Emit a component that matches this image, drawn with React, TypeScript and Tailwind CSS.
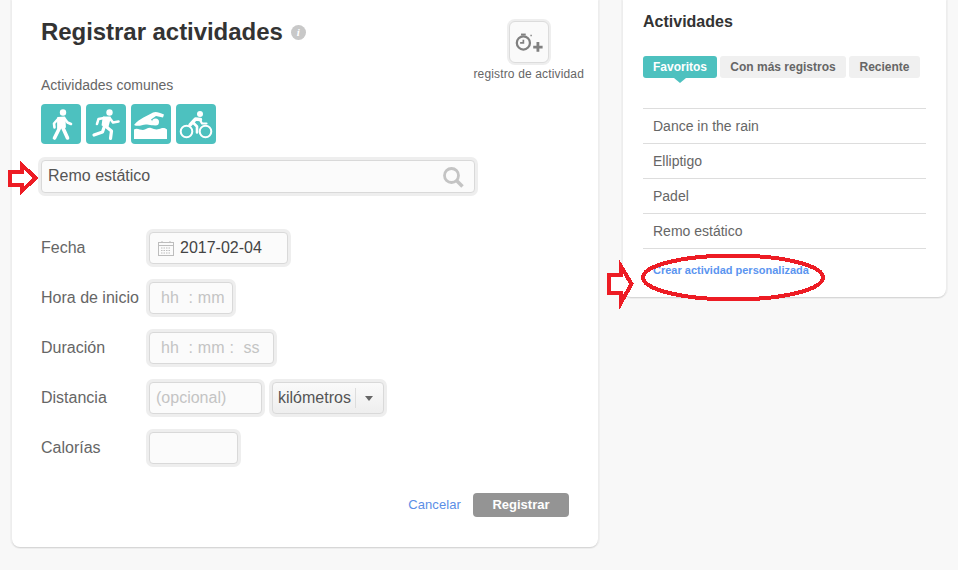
const font = "font-['Liberation_Sans',Arial,sans-serif]";
const field =
  "h-8 rounded border border-[#d9d9d9] bg-[#fbfbfb] shadow-[0_0_0_3px_#eeeeee] flex items-center";

function Walk() {
  return (
    <svg viewBox="0 0 40 40" className="w-10 h-10" fill="white" stroke="white" strokeLinecap="round" strokeLinejoin="round">
      <circle cx="22" cy="8.5" r="3.2" stroke="none" />
      <path d="M17 14 L23.5 13.5 L24 23 L17 24 Z" strokeWidth="1.8" />
      <path d="M17 15 L13 19.5 L13.5 23.5" fill="none" strokeWidth="2.6" />
      <path d="M23.5 14.5 L26.5 18.5 L30 20" fill="none" strokeWidth="2.6" />
      <path d="M18.5 24 L13.5 34" fill="none" strokeWidth="3.6" />
      <path d="M22 24 L26.5 34" fill="none" strokeWidth="3.6" />
    </svg>
  );
}

function Run() {
  return (
    <svg viewBox="0 0 40 40" className="w-10 h-10" fill="white" stroke="white" strokeLinecap="round" strokeLinejoin="round">
      <circle cx="23.5" cy="8.5" r="3.2" stroke="none" />
      <path d="M17.5 13.5 L24 13.5 L21.5 23 L16.5 21 Z" strokeWidth="1.8" />
      <path d="M18 14 L12.5 15 L11 20" fill="none" strokeWidth="2.6" />
      <path d="M24 14.5 L27 18.5 L32.5 17.5" fill="none" strokeWidth="2.6" />
      <path d="M18.5 22 L16.5 28 L8 31" fill="none" strokeWidth="3.2" />
      <path d="M20.5 23 L25.5 27 L24.5 34.5" fill="none" strokeWidth="3.2" />
    </svg>
  );
}

function Swim() {
  return (
    <svg viewBox="0 0 40 40" className="w-10 h-10" fill="white">
      <path d="M3 21 C9 14 16 12 22 8.5 C25 7 28 8.5 33 10.5 L32 13.5 L25 12 L20 15.5 L24 21 C21 22 18 20 15 20.5 C11 21 7 23 3 21 Z" />
      <circle cx="24.5" cy="18" r="3.5" />
      <path d="M3 25.5 C6 23.5 9 26 12 26 C15 26 17 23 20 24 C23 25 25 26 28 25 C31 24 33 23 36 25.5 V35 H3 Z" />
    </svg>
  );
}

function Bike() {
  return (
    <svg viewBox="0 0 40 40" className="w-10 h-10" fill="none" stroke="white" strokeLinecap="round" strokeLinejoin="round">
      <circle cx="24" cy="10" r="3" fill="white" stroke="none" />
      <circle cx="10.5" cy="27.5" r="5.8" strokeWidth="2" />
      <circle cx="29.5" cy="27.5" r="5.8" strokeWidth="2" />
      <path d="M14 21 L19.5 15 L24.5 15.5" strokeWidth="3.4" />
      <path d="M17 18.5 L21 22.5 V28.5" strokeWidth="2.6" />
      <path d="M24 16 L26 19.5 L30.5 19.5" strokeWidth="2.2" />
    </svg>
  );
}

function Stopwatch() {
  return (
    <svg viewBox="0 0 32 32" className="w-[30px] h-[30px]" fill="none" stroke="#808080">
      <circle cx="10" cy="17" r="7" strokeWidth="2.4" />
      <path d="M7.5 8 H12.5" strokeWidth="2" />
      <path d="M10 13.5 V17 H6.5" strokeWidth="1.8" />
      <path d="M17.5 9 H19" strokeWidth="1.6" />
      <path d="M25.5 16 V26.5 M20.5 21.5 H30.5" strokeWidth="3" />
    </svg>
  );
}

function SearchGlass() {
  return (
    <svg viewBox="0 0 22 22" className="w-[22px] h-[22px]" fill="none" stroke="#c4c4c4">
      <circle cx="9.5" cy="9.5" r="7" strokeWidth="2.8" />
      <path d="M14.5 14.5 L20.5 20.5" strokeWidth="3.6" />
    </svg>
  );
}

function Calendar() {
  return (
    <svg viewBox="0 0 16 16" className="w-4 h-4" fill="none" stroke="#bdbdbd" strokeWidth="1">
      <rect x="0.5" y="2.5" width="15" height="13" />
      <path d="M0.5 5.5 H15.5" />
      <path d="M4 1 V3 M12 1 V3" />
      <path d="M3 8 H13 M3 10.5 H13 M3 13 H13" strokeDasharray="1.5 1" />
    </svg>
  );
}

function Row({ label, children }: { label: string; children: React.ReactNode }) {
  return (
    <div className="flex items-center h-8">
      <span className="w-[108px] shrink-0 text-[16px] text-[#666]">{label}</span>
      {children}
    </div>
  );
}

function Annotations() {
  return (
    <svg className="absolute left-0 top-0 w-[958px] h-[570px] pointer-events-none" viewBox="0 0 958 570" shapeRendering="crispEdges">
      <path d="M10 171.5 H21.5 V165 L36 178 L21.5 191 V184.5 H10 Z" fill="white" stroke="#ed1c24" strokeWidth="4" />
      <path d="M609 275 H620.5 V265.5 L631.5 284 L620.5 303.5 V293 H609 Z" fill="white" stroke="#ed1c24" strokeWidth="4" />
      <ellipse cx="733" cy="277.5" rx="90" ry="22" fill="none" stroke="#ed1c24" strokeWidth="4" />
    </svg>
  );
}

const activities = ["Dance in the rain", "Elliptigo", "Padel", "Remo estático"];

export default function App() {
  return (
    <div className={`${font} relative w-[958px] h-[570px] overflow-hidden bg-[#f8f8f8] flex items-start gap-[25px] pl-3`}>
      {/* registro */}
      <div className="w-[586px] h-[547px] shrink-0 bg-white rounded-b-lg shadow-[0_1px_1px_0_#d4d4d4,0_0_0_2px_#f0f0f0] pl-[29px] pr-[14px]">
        <div className="flex justify-between items-start pt-5">
          <div className="flex items-center gap-2 h-6">
            <h1 className="text-[24px] leading-6 font-bold tracking-[-0.05px] text-[#333]">Registrar actividades</h1>
            <span className="w-[15px] h-[15px] rounded-full bg-[#c8c8c8] text-white text-[11px] leading-[15px] italic font-bold text-center font-['Liberation_Serif',serif]">i</span>
          </div>
          <div className="flex flex-col items-center">
            <div className="w-10 h-[42px] mt-px rounded-md border border-[#dcdcdc] bg-[#fafafa] shadow-[0_0_0_2px_#eeeeee] flex items-center justify-center">
              <Stopwatch />
            </div>
            <span className="mt-[3px] text-[12px] leading-4 tracking-[0.15px] text-[#666]">registro de actividad</span>
          </div>
        </div>

        <p className="-mt-[5px] text-[14px] leading-4 text-[#666]">Actividades comunes</p>
        <div className="mt-[11px] flex gap-[5px]">
          {[Walk, Run, Swim, Bike].map((Icon, i) => (
            <div key={i} className="w-10 h-10 rounded bg-[#4dc1bf]">
              <Icon />
            </div>
          ))}
        </div>

        <div className={`${field} mt-4 h-[33px] w-[434px] pl-1.5 pr-2.5 justify-between`}>
          <span className="text-[16px] leading-5 -mt-px text-[#555]">Remo estático</span>
          <SearchGlass />
        </div>

        <div className="mt-[39px] flex flex-col gap-[18px]">
          <Row label="Fecha">
            <div className={`${field} w-[139px] pl-2 gap-1.5`}>
              <Calendar />
              <span className="text-[16px] text-[#444]">2017-02-04</span>
            </div>
          </Row>
          <Row label="Hora de inicio">
            <div className={`${field} w-[84px] pl-[11px] text-[16px] tracking-[0.2px] text-[#c4c4c4] whitespace-pre`}>hh  : mm</div>
          </Row>
          <Row label="Duración">
            <div className={`${field} w-[125px] pl-[11px] text-[16px] tracking-[0.2px] text-[#c4c4c4] whitespace-pre`}>hh  : mm :  ss</div>
          </Row>
          <Row label="Distancia">
            <div className={`${field} w-[113px] pl-1.5 text-[16px] text-[#c4c4c4]`}>(opcional)</div>
            <div className={`${field} ml-[10px] w-[112px] pl-[5px] bg-gradient-to-b from-[#fafafa] to-[#eeeeee]`}>
              <span className="text-[16px] text-[#555]">kilómetros</span>
              <span className="ml-1 h-5 border-l border-[#dddddd]" />
              <span className="ml-[9px] w-0 h-0 border-x-[4px] border-x-transparent border-t-[5px] border-t-[#666]" />
            </div>
          </Row>
          <Row label="Calorías">
            <div className={`${field} w-[89px]`} />
          </Row>
        </div>

        <div className="mt-[29px] flex items-center justify-end gap-3 pr-[15px]">
          <a className="text-[13px] tracking-[0.1px] text-[#5b8ee6]">Cancelar</a>
          <button className="w-24 h-6 rounded bg-[#949494] text-white text-[13px] font-bold">Registrar</button>
        </div>
      </div>

      {/* lista */}
      <div className="w-[323px] h-[297px] shrink-0 bg-white rounded-b-lg shadow-[0_1px_1px_0_#d4d4d4,0_0_0_2px_#f0f0f0] pl-5 pr-5">
        <h2 className="pt-[13px] text-[16px] leading-[18px] font-bold text-[#333]">Actividades</h2>
        <div className="mt-[25px] flex gap-[3px]">
          <div className="relative w-[74px] h-[22px] rounded-[3px] bg-[#4dc1bf] text-white text-[12px] leading-[22px] font-bold text-center">
            Favoritos
            <span className="absolute left-[31px] top-full w-0 h-0 border-x-[6px] border-x-transparent border-t-[5px] border-t-[#4dc1bf]" />
          </div>
          <div className="w-[126px] h-[22px] rounded-[3px] bg-[#f0f0f0] text-[#666] text-[12px] leading-[22px] font-bold text-center">Con más registros</div>
          <div className="w-[71px] h-[22px] rounded-[3px] bg-[#f0f0f0] text-[#666] text-[12px] leading-[22px] font-bold text-center">Reciente</div>
        </div>
        <ul className="mt-[30px] border-t border-[#dddddd]">
          {activities.map((a) => (
            <li key={a} className="h-[35px] pl-2.5 flex items-center border-b border-[#dddddd] text-[14px] text-[#666]">{a}</li>
          ))}
        </ul>
        <a className="block mt-[14px] pl-2.5 text-[11px] leading-[14px] font-bold text-[#5b95f0]">Crear actividad personalizada</a>
      </div>

      <Annotations />
    </div>
  );
}
